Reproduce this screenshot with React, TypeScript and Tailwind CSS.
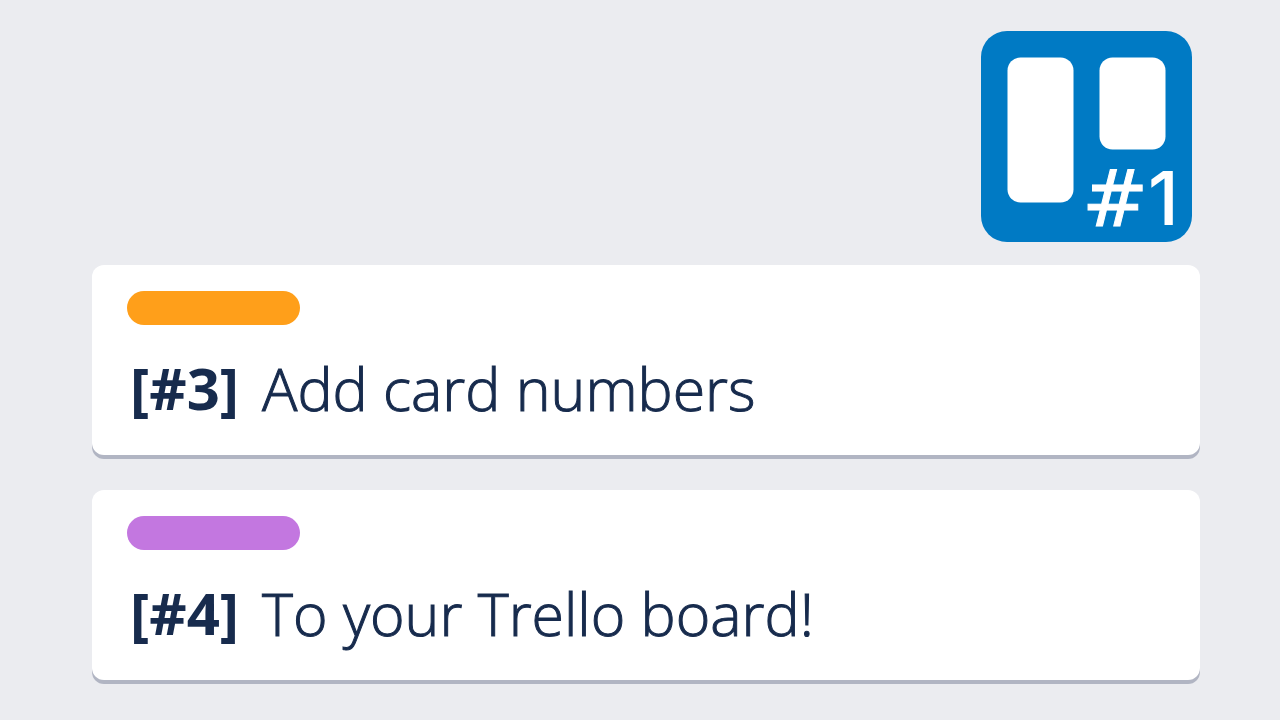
type CardProps = { number: number; title: string; labelClass: string };

function Card({ number, title, labelClass }: CardProps) {
  return (
    <article className="rounded-xl bg-white px-[35px] pt-[26px] pb-[27px] shadow-[0_4px_0_#b1b5c3]">
      <div className={`h-[34px] w-[173px] rounded-full ${labelClass}`} />
      <h2 className="mt-[23px] flex h-20 items-center gap-[23px] pl-[3px] text-[58px] leading-none text-[#172b4d]">
        <span className="font-bold">[#{number}]</span>
        <span className="text-[59px] font-light [-webkit-text-stroke:1px_#172b4d]">{title}</span>
      </h2>
    </article>
  );
}

function Logo() {
  return (
    <svg viewBox="0 0 211 211" className="size-[211px] overflow-visible" role="img" aria-label="Board number 1">
      <rect width="211" height="211" rx="26" fill="#007ac4" />
      <rect x="26.5" y="26.5" width="66" height="145" rx="13" fill="#fff" />
      <rect x="118.5" y="26.5" width="66" height="92" rx="13" fill="#fff" />
      <g fill="#fff" stroke="#fff">
        <text x="101" y="195" fontFamily="DejaVu Sans, sans-serif" fontSize="79" strokeWidth="1">#</text>
        <text x="167" y="194" fontFamily="Inter, sans-serif" fontWeight="500" fontSize="74" strokeWidth="0">1</text>
      </g>
    </svg>
  );
}

export default function App() {
  return (
    <main className="min-h-screen bg-[#ebecf0] pt-[31px] pr-20 pb-9 pl-[92px] font-['Open_Sans',sans-serif]">
      <header className="mb-[23px] flex justify-end pr-2">
        <Logo />
      </header>
      <section className="flex flex-col gap-[35px]">
        <Card number={3} title="Add card numbers" labelClass="bg-[#ff9f1a]" />
        <Card number={4} title="To your Trello board!" labelClass="bg-[#c377e0]" />
      </section>
    </main>
  );
}
